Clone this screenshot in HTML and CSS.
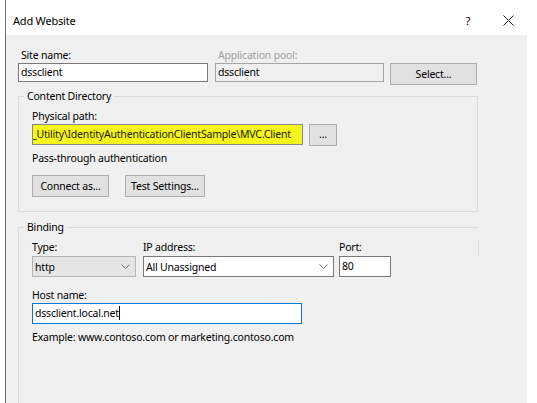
FILE: index.html
```html
<!DOCTYPE html>
<html>
<head>
<meta charset="utf-8">
<link rel="stylesheet" href="styles.css">
</head>
<body>
<div class="window">
  <div class="dialog">
    <div class="titlebar">
      <div class="title">Add Website</div>
      <div class="tb-btn help">?</div>
      <div class="tb-btn close">
        <svg width="11" height="11" viewBox="0 0 11 11"><path d="M0.5 0.5 L10.5 10.5 M10.5 0.5 L0.5 10.5" stroke="#222" stroke-width="1" fill="none"/></svg>
      </div>
    </div>
    <div class="body">
      <div class="row-top">
        <div class="col site">
          <div class="label">Site name:</div>
          <div class="field">dssclient</div>
        </div>
        <div class="col pool">
          <div class="label disabled">Application pool:</div>
          <div class="field readonly">dssclient</div>
        </div>
        <div class="btn select-btn">Select...</div>
      </div>

      <fieldset class="group content">
        <legend>Content Directory</legend>
        <div class="label">Physical path:</div>
        <div class="path-row">
          <div class="field path"><span class="hl">_Utility\IdentityAuthenticationClientSample\MVC.Client</span></div>
          <div class="btn dots">...</div>
        </div>
        <div class="label pass">Pass-through authentication</div>
        <div class="btn-row">
          <div class="btn connect">Connect as...</div>
          <div class="btn test">Test Settings...</div>
        </div>
      </fieldset>

      <fieldset class="group binding">
        <legend>Binding</legend>
        <div class="bind-row">
          <div class="col type">
            <div class="label">Type:</div>
            <div class="combo gray"><span>http</span>
              <svg class="chev" width="9" height="5" viewBox="0 0 9 5"><path d="M0.5 0.5 L4.5 4.5 L8.5 0.5" stroke="#707070" fill="none"/></svg>
            </div>
          </div>
          <div class="col ip">
            <div class="label">IP address:</div>
            <div class="combo white"><span>All Unassigned</span>
              <svg class="chev" width="9" height="5" viewBox="0 0 9 5"><path d="M0.5 0.5 L4.5 4.5 L8.5 0.5" stroke="#707070" fill="none"/></svg>
            </div>
          </div>
          <div class="col port">
            <div class="label">Port:</div>
            <div class="field">80</div>
          </div>
        </div>
        <div class="label host-label">Host name:</div>
        <div class="field host focused">dssclient.local.net<span class="caret"></span></div>
        <div class="label example">Example: www.contoso.com or marketing.contoso.com</div>
      </fieldset>
    </div>
  </div>
</div>
</body>
</html>
```

FILE: styles.css
```css
* { box-sizing: border-box; }
html, body { margin: 0; padding: 0; background: #ffffff; }
body {
  font-family: "Noto Sans", "Open Sans", sans-serif;
  font-size: 10.5px;
  letter-spacing: -0.2px;
  color: #000;
}
.window {
  width: 537px;
  height: 403px;
  overflow: hidden;
  background: #fff;
  padding-left: 5px;
}
.dialog {
  height: 403px;
  border-left: 1px solid #6e6e6e;
  display: flex;
  flex-direction: column;
}
.titlebar {
  height: 35px;
  flex-shrink: 0;
  display: flex;
  align-items: center;
  background: #fff;
  padding-right: 9px;
  padding-top: 5px;
}
.title {
  flex: 1;
  padding-left: 7px;
  font-size: 11px;
}
.tb-btn {
  width: 40px;
  display: flex;
  justify-content: center;
  align-items: center;
  height: 20px;
}
.help { font-size: 11.5px; }
.body {
  flex: 1;
  min-height: 0;
  background: #f0f0f0;
  margin-right: 10px;
  padding: 12px 0 0 12px;
}
.label {
  height: 16px;
  line-height: 16px;
  white-space: nowrap;
}
.label.disabled { color: #a0a0a0; }
.row-top {
  display: flex;
  align-items: flex-end;
}
.col { display: flex; flex-direction: column; }
.site { width: 190px; }
.site .label { padding-left: 3px; }
.pool { width: 169px; margin-left: 7px; }
.pool .label { padding-left: 3px; }
.field {
  height: 19px;
  line-height: 17px;
  border: 1px solid #7a7a7a;
  background: #fff;
  padding-left: 2px;
  white-space: nowrap;
  overflow: hidden;
}
.field.readonly {
  background: #f0f0f0;
  border-color: #a5a5a5;
}
.btn {
  height: 22px;
  line-height: 20px;
  border: 1px solid #adadad;
  background: #e1e1e1;
  text-align: center;
  white-space: nowrap;
}
.select-btn {
  width: 87px;
  margin-left: 6px;
  margin-bottom: -3px;
}
.group {
  margin: 0;
  border: 1px solid #dcdcdc;
  padding: 0 0 0 13px;
  width: 460px;
  position: relative;
}
.group legend {
  padding: 0 3px;
  margin-left: -8px;
  height: 14px;
  line-height: 14px;
}
.content {
  margin-top: 7px;
  padding-top: 5px;
  padding-bottom: 14px;
}
.path-row {
  display: flex;
}
.field.path {
  width: 271px;
  height: 21px;
  line-height: 19px;
  background: #f6f61c;
  padding-left: 0;
  border-color: #888;
}
.hl {
  display: inline-block;
  margin-left: -1px;
  color: #1a1a00;
}
.dots {
  width: 28px;
  margin-left: 6px;
  line-height: 18px;
}
.pass { margin-top: 4px; }
.btn-row {
  display: flex;
  margin-top: 9px;
}
.connect { width: 77px; }
.test { width: 80px; margin-left: 16px; }
.binding {
  margin-top: 8px;
  padding-top: 5px;
  border-right: none;
  border-bottom: none;
  height: 200px;
}
.binding::after {
  content: "";
  position: absolute;
  right: -1px;
  top: 7px;
  height: 14px;
  border-right: 1px solid #dcdcdc;
}
.bind-row { display: flex; }
.type { width: 104px; }
.ip { width: 191px; margin-left: 7px; }
.port { width: 52px; margin-left: 5px; }
.combo {
  height: 21px;
  margin-top: 1px;
  display: flex;
  align-items: center;
  justify-content: space-between;
  padding: 0 5px 0 2px;
  border: 1px solid #adadad;
}
.combo.gray { background: #e5e5e5; border-color: #b5b5b5; }
.combo.white { background: #fff; border-color: #7a7a7a; }
.port .field { height: 21px; margin-top: 1px; line-height: 19px; }
.host-label { margin-top: 10px; }
.field.host {
  width: 270px;
  height: 21px;
  line-height: 19px;
  border-color: #0078d7;
}
.caret {
  display: inline-block;
  width: 1px;
  height: 14px;
  background: #000;
  vertical-align: -3px;
}
.example { margin-top: 5px; }
```
